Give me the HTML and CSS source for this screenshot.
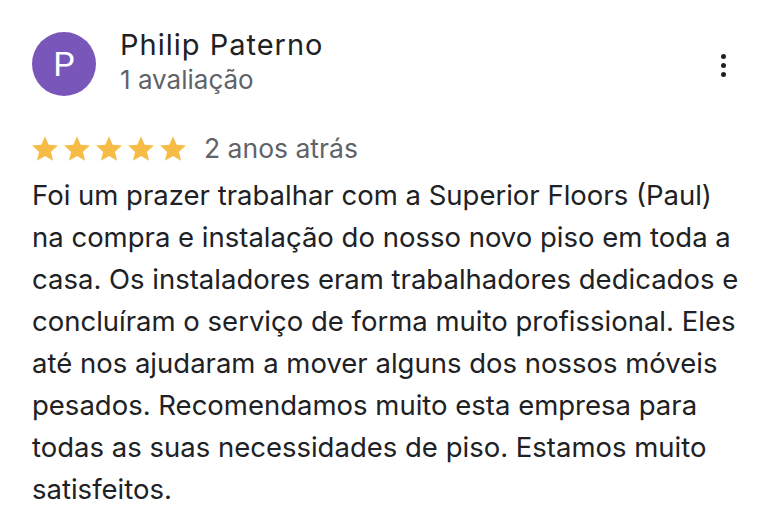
FILE: index.html
```html
<!DOCTYPE html>
<html lang="pt">
<head>
<meta charset="utf-8">
<link rel="stylesheet" href="styles.css">
</head>
<body>
<div class="review">
  <div class="header">
    <div class="avatar">P</div>
    <div class="who">
      <div class="name">Philip Paterno</div>
      <div class="count">1 avaliação</div>
    </div>
    <div class="menu"><span></span><span></span><span></span></div>
  </div>
  <div class="rating">
    <div class="stars">
      <svg class="star" viewBox="2 2 20 19"><path d="M12 17.27L18.18 21l-1.64-7.03L22 9.24l-7.19-.61L12 2 9.19 8.63 2 9.24l5.46 4.73L5.82 21z"/></svg>
      <svg class="star" viewBox="2 2 20 19"><path d="M12 17.27L18.18 21l-1.64-7.03L22 9.24l-7.19-.61L12 2 9.19 8.63 2 9.24l5.46 4.73L5.82 21z"/></svg>
      <svg class="star" viewBox="2 2 20 19"><path d="M12 17.27L18.18 21l-1.64-7.03L22 9.24l-7.19-.61L12 2 9.19 8.63 2 9.24l5.46 4.73L5.82 21z"/></svg>
      <svg class="star" viewBox="2 2 20 19"><path d="M12 17.27L18.18 21l-1.64-7.03L22 9.24l-7.19-.61L12 2 9.19 8.63 2 9.24l5.46 4.73L5.82 21z"/></svg>
      <svg class="star" viewBox="2 2 20 19"><path d="M12 17.27L18.18 21l-1.64-7.03L22 9.24l-7.19-.61L12 2 9.19 8.63 2 9.24l5.46 4.73L5.82 21z"/></svg>
    </div>
    <span class="when">2 anos atrás</span>
  </div>
  <p class="text">Foi um prazer trabalhar com a Superior Floors (Paul) na compra e instalação do nosso novo piso em toda a casa. Os instaladores eram trabalhadores dedicados e concluíram o serviço de forma muito profissional. Eles até nos ajudaram a mover alguns dos nossos móveis pesados. Recomendamos muito esta empresa para todas as suas necessidades de piso. Estamos muito satisfeitos.</p>
</div>
</body>
</html>
```
FILE: styles.css
```css
html, body {
  margin: 0;
  padding: 0;
  background: #ffffff;
}
body {
  font-family: Inter, Roboto, "Liberation Sans", sans-serif;
  color: #202124;
}
.review {
  padding: 32px 30px 0 32px;
  width: 720px;
}
.header {
  display: flex;
  align-items: flex-start;
}
.avatar {
  width: 64px;
  height: 64px;
  border-radius: 50%;
  background: #7957BA;
  color: #ffffff;
  font-family: Roboto, sans-serif;
  font-size: 34px;
  line-height: 64px;
  text-align: center;
  flex: none;
}
.who {
  margin-left: 24px;
  flex: 1;
}
.name {
  font-size: 29px;
  letter-spacing: 1px;
  line-height: 32px;
  margin-top: -3px;
  color: #202124;
}
.count {
  font-size: 26px;
  line-height: 32px;
  color: #5f6368;
  margin-top: 3px;
}
.menu {
  display: flex;
  flex-direction: column;
  align-items: center;
  gap: 4px;
  margin-top: 22px;
  margin-right: 26px;
}
.menu span {
  width: 5px;
  height: 5px;
  border-radius: 50%;
  background: #202124;
}
.rating {
  display: flex;
  align-items: center;
  margin-top: 36px;
  height: 32px;
}
.stars {
  display: flex;
  gap: 6px;
}
.star {
  width: 26px;
  height: 25px;
  fill: #F6BB45;
  display: block;
}
.when {
  margin-left: 18px;
  font-size: 26.5px;
  color: #5f6368;
}
.text {
  margin: 10px 0 0 0;
  width: 710px;
  font-size: 27.5px;
  line-height: 42px;
  color: #202124;
}
```
